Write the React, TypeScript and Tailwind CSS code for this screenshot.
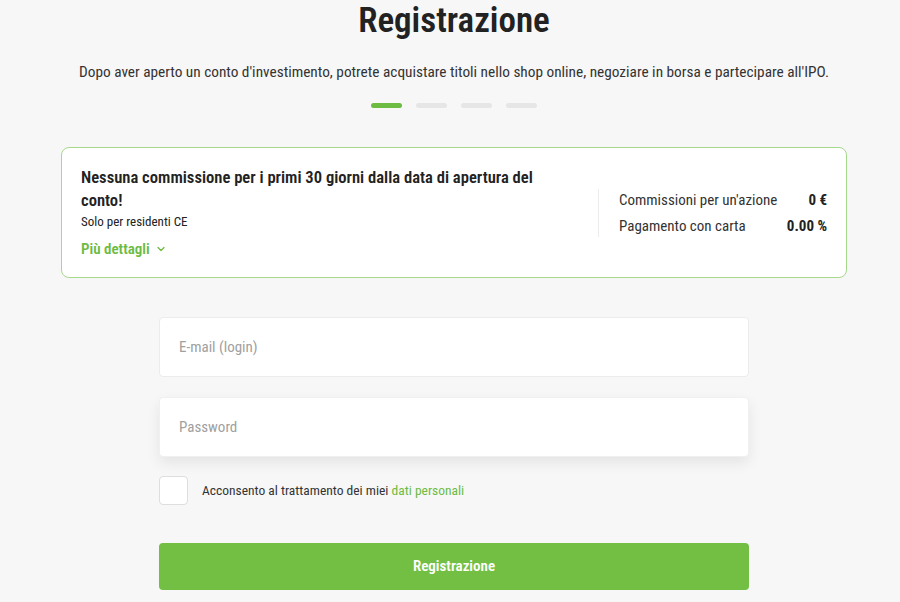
import { ChevronDown } from "lucide-react";

export default function App() {
  return (
    <div className="min-h-[602px] bg-[#f7f7f7] pl-[8px] font-[Roboto] text-[#222] font-stretch-condensed">
      <div className="flex flex-col items-center">
        <h1 className="mt-[1px] text-[35px] font-semibold leading-[40px] text-[#222]">Registrazione</h1>
        <p className="mt-[21px] whitespace-nowrap text-center text-[15.3px] leading-[20px] text-[#333]">
          Dopo aver aperto un conto d'investimento, potrete acquistare titoli nello shop online, negoziare in borsa e partecipare all'IPO.
        </p>
        <div className="mt-[21px] flex gap-[14px]">
          <span className="h-[5px] w-[31px] rounded-full bg-[#6cbb42]" />
          <span className="h-[5px] w-[31px] rounded-full bg-[#e6e6e6]" />
          <span className="h-[5px] w-[31px] rounded-full bg-[#e6e6e6]" />
          <span className="h-[5px] w-[31px] rounded-full bg-[#e6e6e6]" />
        </div>
      </div>

      <div className="mx-auto mt-[39px] flex h-[131px] w-[786px] items-center justify-between rounded-[8px] border border-[#a7d98c] bg-white px-[19px]">
        <div className="w-[475px] self-start pt-[18px]">
          <div className="text-[16.6px] font-semibold leading-[23px] text-[#222]">
            Nessuna commissione per i primi 30 giorni dalla data di apertura del conto!
          </div>
          <div className="mt-[1px] text-[13px] leading-[17px] text-[#222]">Solo per residenti CE</div>
          <button className="mt-[9px] flex items-center gap-[5px] text-[15px] font-semibold leading-[20px] text-[#6cbb42]">
            Più dettagli <ChevronDown size={12} strokeWidth={2.5} />
          </button>
        </div>
        <div className="flex h-[48px] w-[229px] flex-col justify-center gap-[8px] border-l border-[#ececec] pl-[20px] text-[15px] leading-[18px] text-[#333]">
          <div className="flex justify-between">
            <span>Commissioni per un'azione</span>
            <span className="font-bold text-[#222]">0 €</span>
          </div>
          <div className="flex justify-between">
            <span>Pagamento con carta</span>
            <span className="font-bold text-[#222]">0.00 %</span>
          </div>
        </div>
      </div>

      <div className="mx-auto mt-[39px] flex w-[590px] flex-col">
        <input
          className="h-[60px] rounded-[4px] border border-[#ececec] bg-white px-[19px] text-[15px] text-[#333] outline-none placeholder:text-[#a0a0a0]"
          placeholder="E-mail (login)"
        />
        <input
          className="mt-[20px] h-[60px] rounded-[4px] border border-[#f0f0f0] bg-white px-[19px] text-[15px] text-[#333] shadow-[0_6px_14px_rgba(0,0,0,0.08)] outline-none placeholder:text-[#a0a0a0]"
          placeholder="Password"
          type="password"
        />
        <label className="mt-[19px] flex items-center gap-[14px]">
          <span className="h-[29px] w-[29px] rounded-[4px] border border-[#dedede] bg-white" />
          <span className="text-[13.5px] text-[#333]">
            Acconsento al trattamento dei miei <span className="text-[#6cbb42]">dati personali</span>
          </span>
        </label>
        <button className="mt-[38px] h-[47px] rounded-[4px] bg-[#72bf44] text-[15px] font-semibold text-white">
          Registrazione
        </button>
      </div>
    </div>
  );
}
